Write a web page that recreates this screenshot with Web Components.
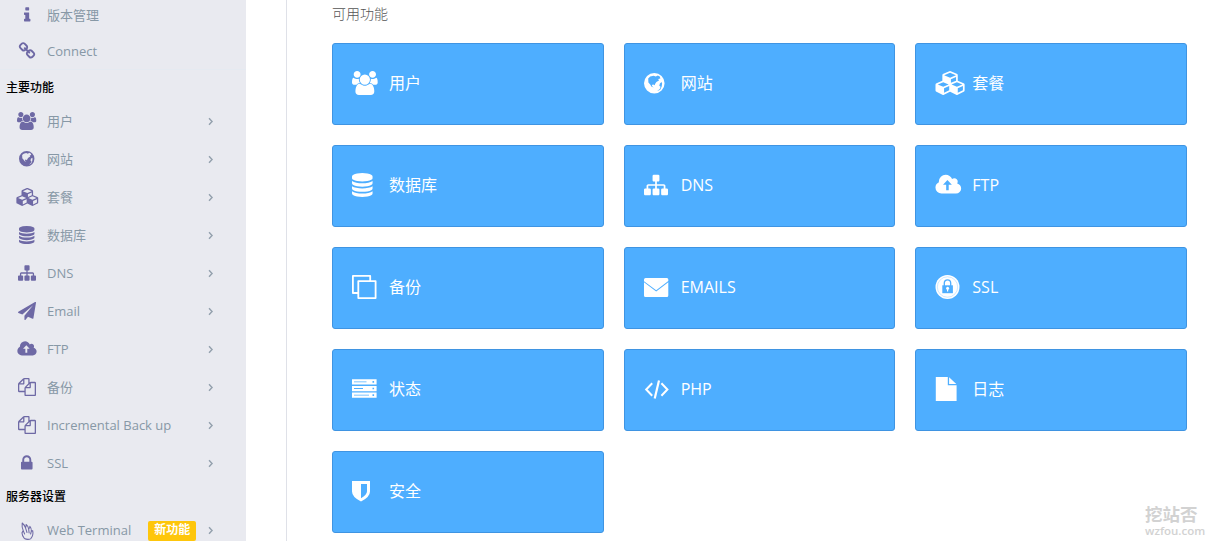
<!DOCTYPE html>
<html lang="zh-CN">
<head>
<meta charset="utf-8">
<title>可用功能</title>
<style>
body {
    margin: 0;
    height: 541px;
    overflow: hidden;
    background: #fff;
    font-family: "Open Sans", "Noto Sans CJK SC", sans-serif;
}
</style>
</head>
<body>
<panel-app></panel-app>
<script>
const FA = (d) => `<path transform="scale(.0133929)" d="${d}"/>`;

// box is x, y, width, height; 24 units make one em
const icons = {
    info: { box: [7.7, 0, 8.6, 24], body: FA("M1216 1344v128q0 26-19 45t-45 19h-512q-26 0-45-19t-19-45v-128q0-26 19-45t45-19h64v-384h-64q-26 0-45-19t-19-45v-128q0-26 19-45t45-19h384q26 0 45 19t19 45v576h64q26 0 45 19t19 45zm-128-1152v192q0 26-19 45t-45 19h-256q-26 0-45-19t-19-45v-192q0-26 19-45t45-19h256q26 0 45 19t19 45z") },
    link: { box: [0, 0, 24, 24], body: FA("M1520 1216q0-40-28-68l-208-208q-28-28-68-28-42 0-72 32 3 3 19 18.5t21.5 21.5 15 19 13 25.5 3.5 27.5q0 40-28 68t-68 28q-15 0-27.5-3.5t-25.5-13-19-15-21.5-21.5-18.5-19q-33 31-33 73 0 40 28 68l206 207q27 27 68 27 40 0 68-26l147-146q28-28 28-67zm-703-705q0-40-28-68l-206-207q-28-28-68-28-39 0-68 27l-147 146q-28 28-28 67 0 40 28 68l208 208q27 27 68 27 42 0 72-31-3-3-19-18.5t-21.5-21.5-15-19-13-25.5-3.5-27.5q0-40 28-68t68-28q15 0 27.5 3.5t25.5 13 19 15 21.5 21.5 18.5 19q33-31 33-73zm895 705q0 120-85 203l-147 146q-83 83-203 83-121 0-204-85l-206-207q-83-83-83-203 0-123 88-209l-88-88q-86 88-208 88-120 0-204-84l-208-208q-84-84-84-204t85-203l147-146q83-83 203-83 121 0 204 85l206 207q83 83 83 203 0 123-88 209l88 88q86-88 208-88 120 0 204 84l208 208q84 84 84 204z") },
    users: { box: [.86, 0, 25.7, 24], body: FA("M657 896q-162 5-265 128h-134q-82 0-138-40.5t-56-118.5q0-353 124-353 6 0 43.5 21t97.5 42.5 119 21.5q67 0 133-23-5 37-5 66 0 139 81 256zm1071 637q0 120-73 189.5t-194 69.5h-874q-121 0-194-69.5t-73-189.5q0-53 3.5-103.5t14-109 26.5-108.5 43-97.5 62-81 85.5-53.5 111.5-20q10 0 43 21.5t73 48 107 48 135 21.5 135-21.5 107-48 73-48 43-21.5q61 0 111.5 20t85.5 53.5 62 81 43 97.5 26.5 108.5 14 109 3.5 103.5zm-1024-1277q0 106-75 181t-181 75-181-75-75-181 75-181 181-75 181 75 75 181zm704 384q0 159-112.5 271.5t-271.5 112.5-271.5-112.5-112.5-271.5 112.5-271.5 271.5-112.5 271.5 112.5 112.5 271.5zm576 225q0 78-56 118.5t-138 40.5h-134q-103-123-265-128 81-117 81-256 0-29-5-66 66 23 133 23 59 0 119-21.5t97.5-42.5 43.5-21q124 0 124 353zm-128-609q0 106-75 181t-181 75-181-75-75-181 75-181 181-75 181 75 75 181z") },
    globe: { box: [0, 0, 20.6, 20.6], body: `<path fill-rule="evenodd" d="M10.3 0a10.3 10.3 0 1 1 0 20.6a10.3 10.3 0 1 1 0-20.6zM4.200 5.400l2-1.800 3.400-.8 2.200.8 2-1.200 2 1.200.6 1.800-2.200.6.8 1.400-2.600 1.600-1.200 1.800-.6 1.400-1.400-.8-1.400.6.6 1.400 1.400 1-2.200-.6-1.400-2.200-1.800-2zM17.600 9l-1.700 1.400-.6 2.400 1.300 1-.8 2.200-2.800 2.200 3.200-1.500 1.500-3.200.4-3z"/>` },
    cubes: { box: [-.5, 0, 29.14, 24], body: FA("M640 1632l384-192v-314l-384 164v342zm-64-454l404-173-404-173-404 173zm1088 454l384-192v-314l-384 164v342zm-64-454l404-173-404-173-404 173zm-448-293l384-165v-266l-384 164v267zm-64-379l441-189-441-189-441 189zm1088 518v416q0 36-19 67t-52 47l-448 224q-25 14-57 14t-57-14l-448-224q-4-2-7-4-2 2-7 4l-448 224q-25 14-57 14t-57-14l-448-224q-33-16-52-47t-19-67v-416q0-38 21.5-70t56.5-48l434-186v-400q0-38 21.5-70t56.5-48l448-192q23-10 50-10t50 10l448 192q35 16 56.5 48t21.5 70v400l434 186q36 16 57 48t21 70z") },
    database: { box: [1.71, 0, 20.57, 24], body: FA("M896 768q237 0 443-43t325-127v170q0 69-103 128t-280 93.5-385 34.5-385-34.5-280-93.5-103-128v-170q119 84 325 127t443 43zm0 768q237 0 443-43t325-127v170q0 69-103 128t-280 93.5-385 34.5-385-34.5-280-93.5-103-128v-170q119 84 325 127t443 43zm0-384q237 0 443-43t325-127v170q0 69-103 128t-280 93.5-385 34.5-385-34.5-280-93.5-103-128v-170q119 84 325 127t443 43zm0-1152q208 0 385 34.5t280 93.5 103 128v128q0 69-103 128t-280 93.5-385 34.5-385-34.5-280-93.5-103-128v-128q0-69 103-128t280-93.5 385-34.5z") },
    sitemap: { box: [0, 0, 24, 24], body: FA("M1792 1248v320q0 40-28 68t-68 28h-320q-40 0-68-28t-28-68v-320q0-40 28-68t68-28h96v-192h-512v192h96q40 0 68 28t28 68v320q0 40-28 68t-68 28h-320q-40 0-68-28t-28-68v-320q0-40 28-68t68-28h96v-192h-512v192h96q40 0 68 28t28 68v320q0 40-28 68t-68 28h-320q-40 0-68-28t-28-68v-320q0-40 28-68t68-28h96v-192q0-52 38-90t90-38h512v-192h-96q-40 0-68-28t-28-68v-320q0-40 28-68t68-28h320q40 0 68 28t28 68v320q0 40-28 68t-68 28h-96v192h512q52 0 90 38t38 90v192h96q40 0 68 28t28 68z") },
    plane: { box: [0, 0, 24, 24], body: FA("M1764 11q33 24 27 64l-256 1536q-5 29-32 45-14 8-31 8-11 0-24-5l-453-185-242 295q-18 23-49 23-13 0-22-4-19-7-30.5-23.5t-11.5-36.5v-349l864-1059-1069 925-395-162q-37-14-40-55-2-40 32-59l1664-960q15-9 32-9 20 0 36 11z") },
    cloud: { box: [-1.3, 0, 25.7, 24], body: FA("M832 530l-330 350h235v400h190v-400h235zM1856 1152q0 159-112.5 271.5t-271.5 112.5h-1088q-185 0-316.5-131.5t-131.5-316.5q0-130 70-240t188-165q-2-30-2-43 0-212 150-362t362-150q156 0 285.5 87t188.5 231q71-62 166-62 106 0 181 75t75 181q0 76-41 138 130 31 213.5 135.5t83.5 238.5z") },
    files: { box: [0, 0, 24, 24], body: FA("M1696 384q40 0 68 28t28 68v1216q0 40-28 68t-68 28h-960q-40 0-68-28t-28-68v-288h-544q-40 0-68-28t-28-68v-672q0-40 20-88t48-76l408-408q28-28 76-48t88-20h416q40 0 68 28t28 68v328q68-40 128-40h416zm-544 213l-299 299h299v-299zm-640-384l-299 299h299v-299zm196 647l316-316v-416h-384v416q0 40-28 68t-68 28h-416v640h512v-256q0-40 20-88t48-76zm956 804v-1152h-384v416q0 40-28 68t-68 28h-416v640h896z") },
    lock: { box: [4.3, 0, 15.4, 24], body: FA("M640 768h512v-192q0-106-75-181t-181-75-181 75-75 181v192zm832 96v576q0 40-28 68t-68 28h-960q-40 0-68-28t-28-68v-576q0-40 28-68t68-28h32v-192q0-184 132-316t316-132 316 132 132 316v192h32q40 0 68 28t28 68z") },
    flame: { box: [0, 0, 17, 22], body: `<path fill="none" stroke="currentColor" stroke-width="1.400" stroke-linejoin="round" stroke-linecap="round" d="M4.500 22Q1.500 18.500 1.300 14.500L3 11.500Q.8 6 1.600 1.300Q4.500 3.500 6 7.800Q7.200 5.500 6.800 3.300Q9.500 5 10.200 9.200Q12 8 11.800 5.800Q14.200 8.500 13.800 12.200L15.600 11.500Q17 18 12.800 22.500Q8.500 24 4.500 22M3 11.500L4.800 16M6 7.800L8 14M10.200 9.200L10.800 14.500M13.800 12.200L12.800 16"/>` },
    clone: { box: [0, 0, 24.5, 24], body: `<path fill="none" stroke="currentColor" stroke-width="1.8" stroke-linejoin="round" d="M5.500 18H.9V.9h17.300v4.300M6.300 6.100h17.300v17H6.300z"/>` },
    envelope: { box: [0, 0, 24.6, 19], body: '<path d="M1.600 0h21.400q1.300 0 1.300 1.500v1.600L12.200 12.200 0 3.200V1.500Q0 0 1.600 0zM0 4.300l12.200 9.100 12.100-9.200V17.500q0 1.500-1.500 1.500H1.500Q0 19 0 17.500z"/>' },
    seal: { box: [-.5, 0, 24, 24], body: `<circle cx="12" cy="12" r="12"/><circle cx="12" cy="12" r="10.200" fill="none" stroke="#4eaeff" stroke-opacity=".4" stroke-width=".7"/>
        <path fill="none" stroke="#4eaeff" stroke-width="1.300" d="M8.800 11V8a3.200 3.200 0 0 1 6.400 0v3"/><path fill="#4eaeff" d="M6.800 10.300h10.600v7.900H6.800z"/>
        <circle cx="12.100" cy="13.200" r="1.500"/><path d="M11.500 13h1.200v3.600h-1.200z"/>` },
    server: { box: [0, .7, 24.6, 18.500], body: '<path fill-rule="evenodd" d="M0 0h24.600v5.300H0zM2 2.200v.8h12.500v-.8zM20.500 1.800v1.600h1.600V1.800zM0 6.600h24.600v5.300H0zM2 8.800v.8h9v-.8zM20.500 8.400v1.600h1.600V8.400zM0 13.200h24.600v5.300H0zM2 15.400v.8h15v-.8zM20.500 15v1.600h1.600V15z"/>' },
    code: { box: [0, 0, 25, 19], body: '<path fill="none" stroke="currentColor" stroke-width="2" d="M8.200 3.300L2.200 9.500l6 6.200M17.400 3.300l6 6.200-6 6.200"/><path fill="none" stroke="currentColor" stroke-width="2.200" d="M15 .5L10.700 18.500"/>' },
    file: { box: [-.8, 0, 20.8, 24], body: '<path d="M0 0h12v8.300h8.800V24H0zM13.300.3l7.200 6.700h-7.200z"/>' },
    shield: { box: [0, 0, 18, 20.500], body: '<path fill-rule="evenodd" d="M0 0h18v10.500q0 5.500-9 10-9-4.500-9-10zM9 3v14.300q6-3.300 6-7V3z"/>' },
    angle: { box: [-.5, 0, 9, 12], body: '<path fill="none" stroke="currentColor" stroke-width="1.900" d="M2.200 1.800L6.200 6l-4 4.200"/>' },
};

class UiIcon extends HTMLElement {
    connectedCallback() {
        const { box, body } = icons[this.getAttribute("name")];
        const em = Number(this.getAttribute("size")) / 24;
        const shadowRoot = this.attachShadow({ mode: "open" });
        shadowRoot.innerHTML = `<style>
            :host { display: inline-flex; flex: none; }
            svg { display: block; overflow: visible; fill: currentColor; }
        </style>
        <svg viewBox="${box.join(" ")}" width="${box[2] * em}" height="${box[3] * em}">${body}</svg>`;
    }
}
customElements.define("ui-icon", UiIcon);

class NavItem extends HTMLElement {
    connectedCallback() {
        const shadowRoot = this.attachShadow({ mode: "open" });
        shadowRoot.innerHTML = `<style>
            :host {
                display: flex;
                flex: none;
                align-items: center;
                box-sizing: border-box;
                height: 38px;
                padding: 0 32px 0 13px;
                font-size: 13px;
                line-height: 18px;
                color: #8798a6;
                white-space: nowrap;
            }
            :host([plain]) { height: 36px; }
            .icon { display: flex; justify-content: center; width: 28px; margin-right: 6px; color: #6e69a5; }
            .label { flex: 1; }
            .arrow { color: #93a0ad; }
        </style>
        <span class="icon"><ui-icon name="${this.getAttribute("icon")}" size="18"></ui-icon></span>
        <span class="label"><slot></slot></span>
        <slot name="badge"></slot>
        ${this.hasAttribute("plain") ? "" : '<ui-icon class="arrow" name="angle" size="18"></ui-icon>'}`;
    }
}
customElements.define("nav-item", NavItem);

class NavHeading extends HTMLElement {
    connectedCallback() {
        const shadowRoot = this.attachShadow({ mode: "open" });
        shadowRoot.innerHTML = `<style>
            :host {
                display: flex;
                flex: none;
                align-items: center;
                box-sizing: border-box;
                height: 29px;
                padding-left: 6px;
                font-size: 12px;
                font-weight: 500;
                line-height: 16px;
                color: #000;
            }
            :host([ruled]) {
                height: 33px;
                padding-top: 4px;
                border-top: 1px solid #e5eaf1;
            }
        </style><slot></slot>`;
    }
}
customElements.define("nav-heading", NavHeading);

class NewBadge extends HTMLElement {
    connectedCallback() {
        const shadowRoot = this.attachShadow({ mode: "open" });
        shadowRoot.innerHTML = `<style>
            :host {
                display: block;
                width: 48px;
                height: 20px;
                margin: 2px 11px 0 0;
                border-radius: 2px;
                background: #fec60b;
                color: #fff;
                font-size: 12px;
                font-weight: 700;
                line-height: 18px;
                text-align: center;
            }
        </style><slot></slot>`;
    }
}
customElements.define("new-badge", NewBadge);

class FeatureCard extends HTMLElement {
    connectedCallback() {
        const shadowRoot = this.attachShadow({ mode: "open" });
        shadowRoot.innerHTML = `<style>
            :host {
                display: flex;
                align-items: center;
                box-sizing: border-box;
                height: 82px;
                padding: 0 19px 2px;
                border: 1px solid #3f94e2;
                border-radius: 3px;
                background: #4eaeff;
                color: #fff;
                font-size: 16px;
                line-height: 22px;
            }
            .icon { display: flex; width: 37px; }
        </style>
        <span class="icon"><ui-icon name="${this.getAttribute("icon")}" size="24"></ui-icon></span>
        <slot></slot>`;
    }
}
customElements.define("feature-card", FeatureCard);

class PanelApp extends HTMLElement {
    connectedCallback() {
        const shadowRoot = this.attachShadow({ mode: "open" });
        shadowRoot.innerHTML = `<style>
            :host { display: flex; height: 541px; overflow: hidden; }
            nav {
                display: flex;
                flex-direction: column;
                flex: none;
                box-sizing: border-box;
                width: 246px;
                background: #e9eaf0;
            }
            nav > :first-child { margin-top: -3px; }
            main {
                flex: 1;
                margin-left: 40px;
                padding: 4px 28px 0 45px;
                border-left: 1px solid #dfe1e8;
            }
            h2 { margin: 0 0 19px; font-size: 14px; font-weight: 300; line-height: 20px; color: #555; }
            .grid { display: grid; grid-template-columns: repeat(3, 1fr); gap: 20px; }
            .mark {
                position: absolute;
                left: 1145px;
                top: 501px;
                color: #d2d2d2;
                font-weight: 700;
                font-size: 17.5px;
                line-height: 26px;
            }
            .mark small {
                display: block;
                font-size: 11.5px;
                font-weight: 600;
                line-height: 16px;
                margin-top: -5px;
            }
            .mark span { display: block; height: 27px; }
        </style>
        <nav>
            <nav-item plain icon="info">版本管理</nav-item>
            <nav-item plain icon="link">Connect</nav-item>
            <nav-heading ruled>主要功能</nav-heading>
            <nav-item icon="users">用户</nav-item>
            <nav-item icon="globe">网站</nav-item>
            <nav-item icon="cubes">套餐</nav-item>
            <nav-item icon="database">数据库</nav-item>
            <nav-item icon="sitemap">DNS</nav-item>
            <nav-item icon="plane">Email</nav-item>
            <nav-item icon="cloud">FTP</nav-item>
            <nav-item icon="files">备份</nav-item>
            <nav-item icon="files">Incremental Back up</nav-item>
            <nav-item icon="lock">SSL</nav-item>
            <nav-heading>服务器设置</nav-heading>
            <nav-item icon="flame">Web Terminal<new-badge slot="badge">新功能</new-badge></nav-item>
        </nav>
        <main>
            <h2>可用功能</h2>
            <div class="grid">
                <feature-card icon="users">用户</feature-card>
                <feature-card icon="globe">网站</feature-card>
                <feature-card icon="cubes">套餐</feature-card>
                <feature-card icon="database">数据库</feature-card>
                <feature-card icon="sitemap">DNS</feature-card>
                <feature-card icon="cloud">FTP</feature-card>
                <feature-card icon="clone">备份</feature-card>
                <feature-card icon="envelope">EMAILS</feature-card>
                <feature-card icon="seal">SSL</feature-card>
                <feature-card icon="server">状态</feature-card>
                <feature-card icon="code">PHP</feature-card>
                <feature-card icon="file">日志</feature-card>
                <feature-card icon="shield">安全</feature-card>
            </div>
        </main>
        <div class="mark"><span>挖站否</span><small>wzfou.com</small></div>`;
    }
}
customElements.define("panel-app", PanelApp);
</script>
</body>
</html>
